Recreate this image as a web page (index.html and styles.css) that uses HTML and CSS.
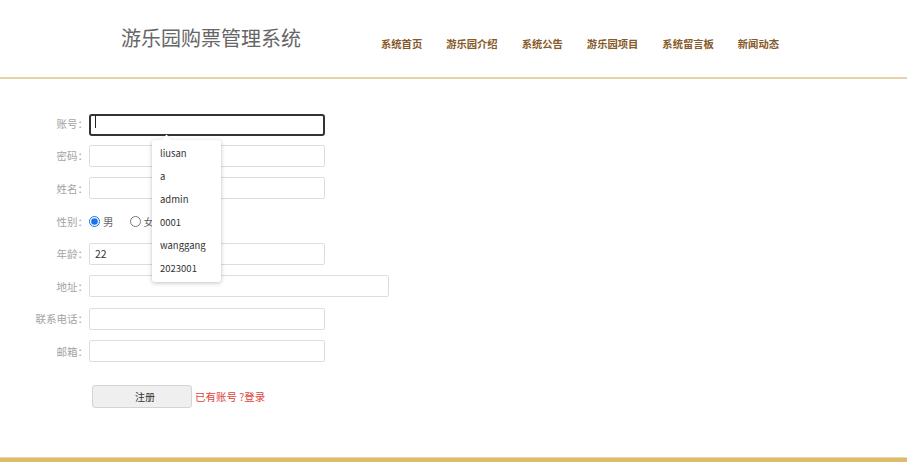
FILE: index.html
```html
<!DOCTYPE html>
<html lang="zh-CN">
	<head>
		<meta charset="UTF-8" />
		<meta name="viewport" content="width=device-width, initial-scale=1.0" />
		<title>游乐园购票管理系统 - 注册</title>
		<link rel="stylesheet" href="styles.css">
	</head>
	<body>
		<div class="header">
			<div class="logo">游乐园购票管理系统</div>
			<ul class="nav">
				<li><a href="#">系统首页</a></li>
				<li><a href="#">游乐园介绍</a></li>
				<li><a href="#">系统公告</a></li>
				<li><a href="#">游乐园项目</a></li>
				<li><a href="#">系统留言板</a></li>
				<li><a href="#">新闻动态</a></li>
			</ul>
		</div>

		<form class="reg-form" onsubmit="return false">
			<div class="row">
				<label class="lbl">账号：</label>
				<span class="field focused">
					<input type="text" class="txt" name="username" autocomplete="off" />
				</span>
				<!-- saved account suggestions -->
				<ul class="suggest">
					<li>liusan</li>
					<li>a</li>
					<li>admin</li>
					<li>0001</li>
					<li>wanggang</li>
					<li>2023001</li>
				</ul>
			</div>
			<div class="row">
				<label class="lbl">密码：</label>
				<input type="password" class="txt" name="password" />
			</div>
			<div class="row">
				<label class="lbl">姓名：</label>
				<input type="text" class="txt" name="name" />
			</div>
			<div class="row">
				<label class="lbl">性别：</label>
				<label class="radio"><input type="radio" name="sex" value="男" checked />男</label>
				<label class="radio"><input type="radio" name="sex" value="女" />女</label>
			</div>
			<div class="row">
				<label class="lbl">年龄：</label>
				<input type="text" class="txt" name="age" value="22" />
			</div>
			<div class="row">
				<label class="lbl">地址：</label>
				<input type="text" class="txt wide" name="address" />
			</div>
			<div class="row">
				<label class="lbl">联系电话：</label>
				<input type="text" class="txt" name="tel" />
			</div>
			<div class="row">
				<label class="lbl">邮箱：</label>
				<input type="text" class="txt" name="email" />
			</div>
			<div class="row btn-row">
				<button type="submit" class="btn">注册</button>
				<a href="#" class="login-link">已有账号 ?登录</a>
			</div>
		</form>

		<div class="footer"></div>
	</body>
</html>
```

FILE: styles.css
```css
* {
	box-sizing: border-box;
}

html,
body {
	margin: 0;
	padding: 0;
	height: 100%;
}

body {
	display: flex;
	flex-direction: column;
	background: #fff;
	font-family: 'Noto Sans CJK SC', 'Noto Sans', sans-serif;
	overflow: hidden;
}

a {
	text-decoration: none;
}

/* top bar */
.header {
	display: flex;
	height: 79px;
	padding-left: 121px;
	border-bottom: 2px solid #e4d3a6;
}
.logo {
	width: 180px;
	margin-top: 23px;
	font-size: 20px;
	line-height: 30px;
	color: #666;
	white-space: nowrap;
}
.nav {
	display: flex;
	gap: 24px;
	margin: 29px 0 0 80px;
	padding: 0;
	list-style: none;
}
.nav a {
	font-size: 10.3px;
	line-height: 18px;
	font-weight: bold;
	color: #85592a;
	white-space: nowrap;
}

/* register form */
.reg-form {
	flex: 1;
	padding-top: 28px;
}
.row {
	position: relative;
	display: flex;
	align-items: center;
	height: 32.6px;
}
.lbl {
	width: 88px;
	text-align: right;
	font-size: 10.5px;
	color: #a3a3a3;
	white-space: nowrap;
	margin-right: 1px;
}
.txt {
	width: 236px;
	height: 22px;
	padding: 0 5px;
	border: 1px solid #ddd;
	border-radius: 2px;
	font-family: inherit;
	font-size: 10.5px;
	color: #333;
	outline: none;
}
.txt.wide {
	width: 300px;
}
.field {
	position: relative;
	display: block;
}
.field.focused .txt {
	border: 2px solid #333;
	border-radius: 3px;
}
.field.focused::after {
	content: '';
	position: absolute;
	left: 6px;
	top: 5px;
	width: 1px;
	height: 12px;
	background: #222;
}

.suggest {
	position: absolute;
	left: 152px;
	top: 33px;
	z-index: 5;
	width: 69px;
	margin: 0;
	padding: 2px 0;
	list-style: none;
	background: #fff;
	border-radius: 3px;
	box-shadow: 0 1px 4px rgba(0, 0, 0, 0.25);
}
.suggest::before {
	content: '';
	position: absolute;
	left: 11px;
	top: -4px;
	width: 7px;
	height: 7px;
	background: #fff;
	transform: rotate(45deg);
	box-shadow: -1px -1px 1px rgba(0, 0, 0, 0.08);
}
.suggest li {
	height: 23px;
	line-height: 23px;
	padding-left: 8px;
	font-size: 9.5px;
	color: #333;
}

.radio {
	display: flex;
	align-items: center;
	margin-right: 16px;
	font-size: 10.5px;
	color: #666;
}
.radio input {
	width: 11px;
	height: 11px;
	margin: 0 3px 0 0;
	accent-color: #1a73e8;
}

.btn-row {
	margin-top: 12px;
	padding-left: 92px;
}
.btn {
	width: 100px;
	height: 23px;
	padding: 0 0 0 6px;
	border: 1px solid #d4d4d4;
	border-radius: 3px;
	background: #efefef;
	font-family: inherit;
	font-size: 10px;
	color: #333;
	cursor: pointer;
}
.login-link {
	margin-left: 3px;
	font-size: 10.5px;
	color: #e0443d;
}

.footer {
	height: 5px;
	background: #dcbc6c;
	border-top: 1px solid #ead9a8;
}
```
